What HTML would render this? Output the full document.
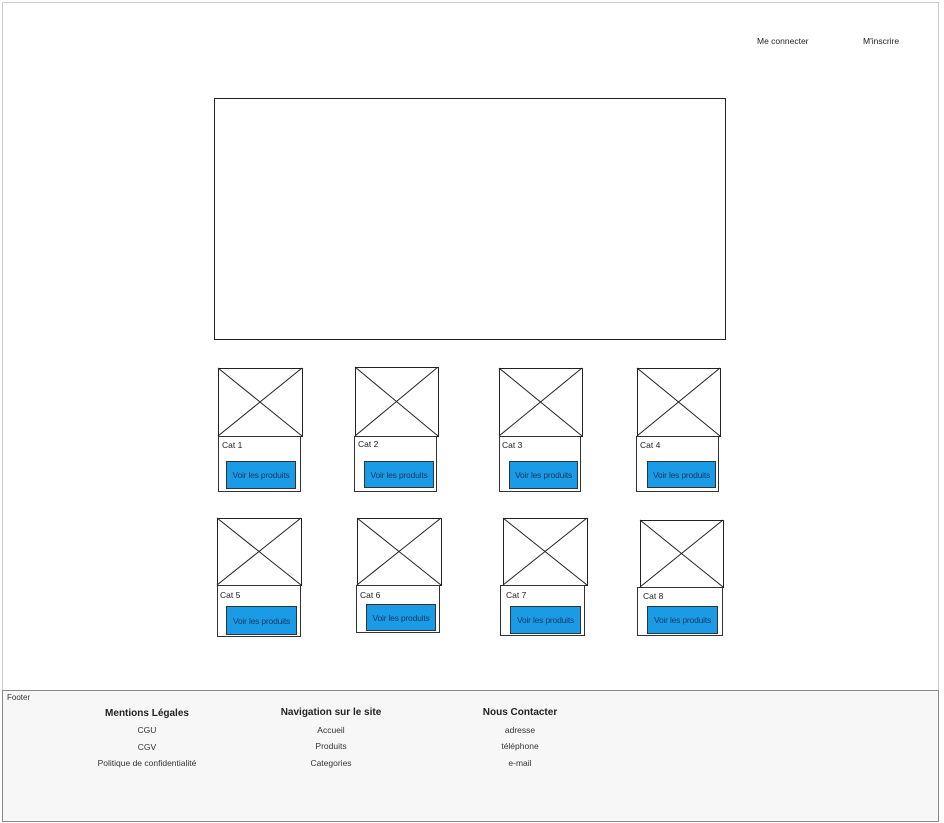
<!DOCTYPE html>
<html><head><meta charset="utf-8"><style>
body{margin:0;width:944px;height:823px;background:#fff;position:relative;overflow:hidden;font-family:"Liberation Sans",sans-serif;color:#222}
.a{position:absolute;box-sizing:border-box}
.img{border:1px solid #222;background:#fff}
.box{border:1px solid #333;background:#fff}
.btn{background:#1a9be6;border:1px solid #333;font-size:8.5px;color:#1a3a60;display:flex;align-items:center;justify-content:center;letter-spacing:-0.2px}
.cat{font-size:8.5px;color:#222}
.ft{font-size:8.5px;color:#333;text-align:center;width:200px}
.fh{font-size:10px;font-weight:bold;color:#222;text-align:center;width:200px}
</style></head><body>
<div class="a" style="left:2px;top:2px;width:937px;height:820px;border:1px solid #ccc"></div>
<div class="a" style="left:757px;top:36px;font-size:8.5px">Me connecter</div>
<div class="a" style="left:863px;top:36px;font-size:8.5px">M'inscrire</div>
<div class="a" style="left:214px;top:98px;width:512px;height:242px;border:1px solid #222;border-top-width:1.5px"></div>

<svg class="a" style="left:0;top:0" width="944" height="823">
<g stroke="#222" stroke-width="1" fill="none">
<path d="M218 368L302 436M302 368L218 436"/>
<path d="M355 367L438 436M438 367L355 436"/>
<path d="M499 368L582 436M582 368L499 436"/>
<path d="M637 368L720 436M720 368L637 436"/>
<path d="M217 518L301 585M301 518L217 585"/>
<path d="M357 518L441 585M441 518L357 585"/>
<path d="M503 518L587 585M587 518L503 585"/>
<path d="M640 520L723 587M723 520L640 587"/>
</g></svg>
<div class="a img" style="left:218px;top:368px;width:85px;height:69px;background:none"></div>
<div class="a img" style="left:355px;top:367px;width:84px;height:70px;background:none"></div>
<div class="a img" style="left:499px;top:368px;width:84px;height:69px;background:none"></div>
<div class="a img" style="left:637px;top:368px;width:84px;height:69px;background:none"></div>
<div class="a img" style="left:217px;top:518px;width:85px;height:68px;background:none"></div>
<div class="a img" style="left:357px;top:518px;width:85px;height:68px;background:none"></div>
<div class="a img" style="left:503px;top:518px;width:85px;height:68px;background:none"></div>
<div class="a img" style="left:640px;top:520px;width:84px;height:68px;background:none"></div>

<div class="a box" style="left:218px;top:436px;width:83px;height:56px"></div>
<div class="a box" style="left:354px;top:436px;width:83px;height:56px"></div>
<div class="a box" style="left:499px;top:436px;width:82px;height:56px"></div>
<div class="a box" style="left:636px;top:436px;width:83px;height:56px"></div>
<div class="a box" style="left:217px;top:585px;width:84px;height:52px"></div>
<div class="a box" style="left:356px;top:585px;width:84px;height:48px"></div>
<div class="a box" style="left:500px;top:585px;width:85px;height:51px"></div>
<div class="a box" style="left:637px;top:587px;width:86px;height:49px"></div>

<div class="a cat" style="left:222px;top:440px">Cat 1</div>
<div class="a cat" style="left:358px;top:439px">Cat 2</div>
<div class="a cat" style="left:502px;top:440px">Cat 3</div>
<div class="a cat" style="left:640px;top:440px">Cat 4</div>
<div class="a cat" style="left:220px;top:590px">Cat 5</div>
<div class="a cat" style="left:360px;top:590px">Cat 6</div>
<div class="a cat" style="left:506px;top:590px">Cat 7</div>
<div class="a cat" style="left:643px;top:591px">Cat 8</div>

<div class="a btn" style="left:226px;top:461px;width:70px;height:28px">Voir les produits</div>
<div class="a btn" style="left:364px;top:461px;width:70px;height:27px">Voir les produits</div>
<div class="a btn" style="left:509px;top:461px;width:69px;height:28px">Voir les produits</div>
<div class="a btn" style="left:647px;top:461px;width:69px;height:27px">Voir les produits</div>
<div class="a btn" style="left:226px;top:606px;width:71px;height:29px">Voir les produits</div>
<div class="a btn" style="left:366px;top:604px;width:70px;height:27px">Voir les produits</div>
<div class="a btn" style="left:510px;top:606px;width:71px;height:28px">Voir les produits</div>
<div class="a btn" style="left:647px;top:606px;width:71px;height:28px">Voir les produits</div>

<div class="a" style="left:2px;top:690px;width:937px;height:132px;background:#f7f7f7;border:1px solid #888"></div>
<div class="a" style="left:7px;top:693px;font-size:8px;color:#333">Footer</div>
<div class="a fh" style="left:47px;top:708px">Mentions Légales</div>
<div class="a fh" style="left:231px;top:707px">Navigation sur le site</div>
<div class="a fh" style="left:420px;top:707px">Nous Contacter</div>
<div class="a ft" style="left:47px;top:725px">CGU</div>
<div class="a ft" style="left:47px;top:742px">CGV</div>
<div class="a ft" style="left:47px;top:758px">Politique de confidentialité</div>
<div class="a ft" style="left:231px;top:725px">Accueil</div>
<div class="a ft" style="left:231px;top:741px">Produits</div>
<div class="a ft" style="left:231px;top:758px">Categories</div>
<div class="a ft" style="left:420px;top:725px">adresse</div>
<div class="a ft" style="left:420px;top:741px">téléphone</div>
<div class="a ft" style="left:420px;top:758px">e-mail</div>
</body></html>
